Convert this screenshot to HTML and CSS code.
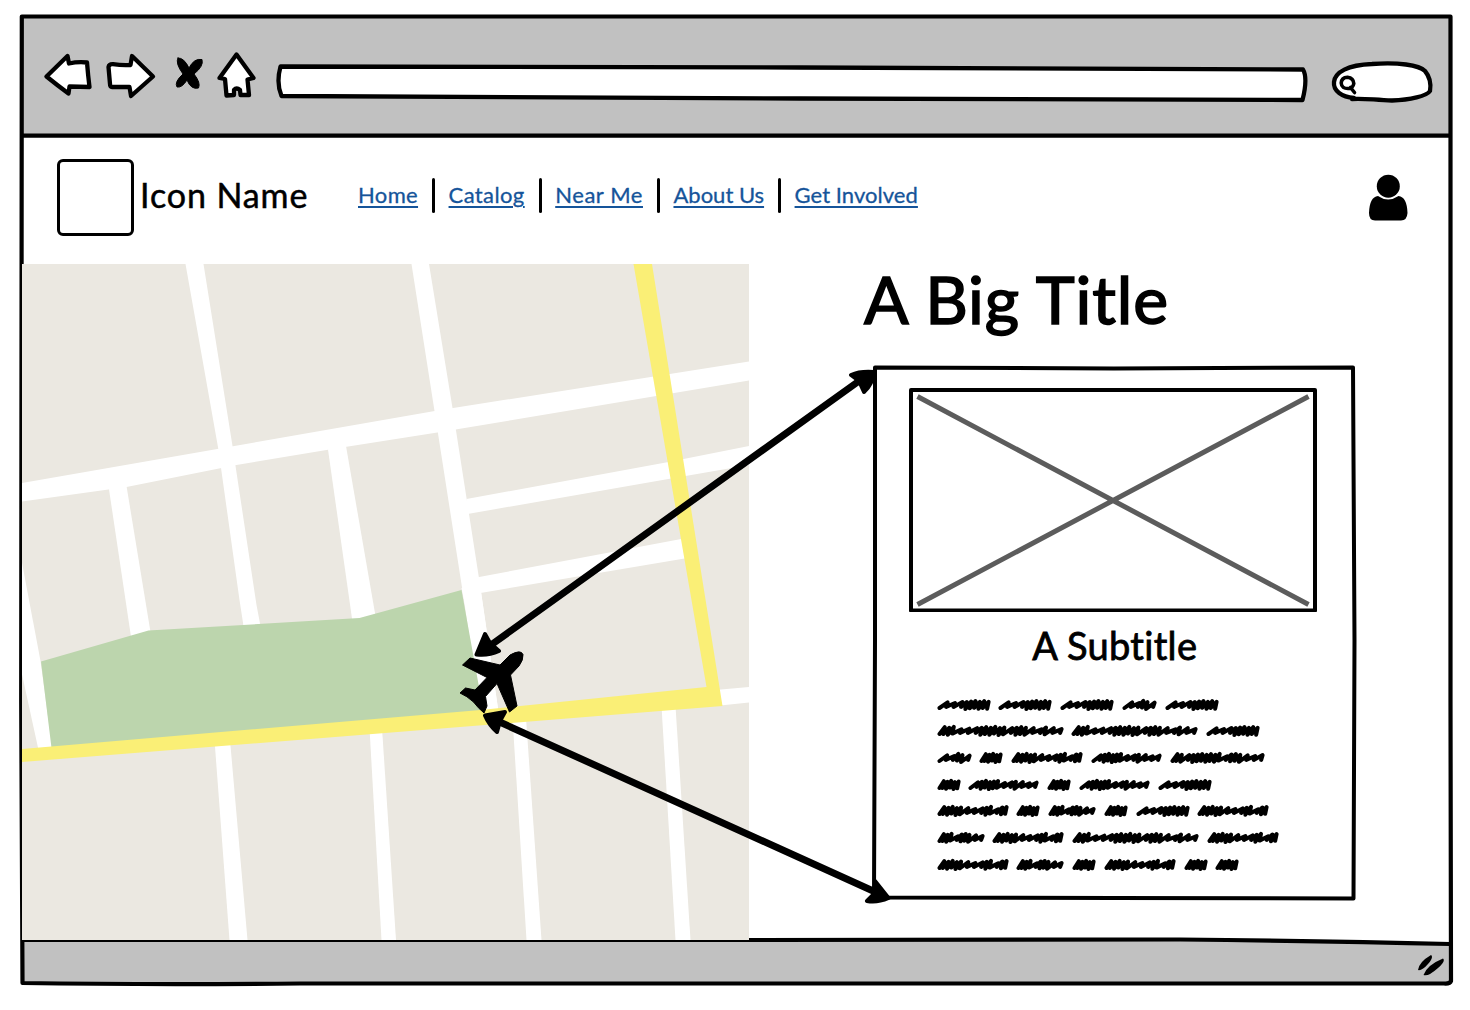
FILE: index.html
```html
<!DOCTYPE html>
<html lang="en">
<head>
<meta charset="utf-8">
<title>Icon Name</title>
<link rel="stylesheet" href="styles.css">
</head>
<body>
<div class="window">
  <svg class="frame" viewBox="0 0 1470 1010">
    <path d="M22 940L749 940L1180 939.5Q1330 941 1450 944" />
    <path d="M21.800 16.500H1450.500V700L1451 981Q1450 984 1444 983.500L900 983.500L300 983.500Q150 985 22.500 983L21.200 700L21.800 16.500Z" />
    <path d="M22 135.700H1450" />
  </svg>

  <header class="toolbar">
    <svg class="tool" width="52" height="56" viewBox="44 50 52 56"><path d="M46.500 76.500L67.500 56L69 63.500Q78 61.500 87 62.500Q88 75 89.500 87L69.500 86.500L68.500 93.500Q57 85 46.500 76.500Z"/></svg>
    <svg class="tool" width="54" height="56" viewBox="106 50 54 56"><path d="M108.500 67Q109 64 113 64.200Q122 65.500 130.500 65L132 56L153 76.500L131 96L129.500 87H112Q110 87 110 84Z"/></svg>
    <svg class="tool solid" width="36" height="56" viewBox="170 50 36 56"><path d="M178 58Q184 57.500 189 68Q194 58 202 59.500Q204 66 194 74Q201 83 198.500 88Q191 90 187 80Q182 88 177 87Q174 82 183 74Q175 63 178 58Z"/></svg>
    <svg class="tool" width="46" height="56" viewBox="216 50 46 56"><path d="M236.500 54.500L253.500 78L247.500 79.500L249 95L240.500 95L240 90Q236.500 87 234 90L234 95L226.500 95.500L225 79L219.500 78Z"/></svg>
    <svg class="tool address" width="1044" height="56" viewBox="272 50 1044 56"><path d="M280.500 66.500L800 67.500L1303 69.500Q1308 78 1302.500 100L800 98.500L281.500 96Q276 83 280.500 66.500Z"/></svg>
    <svg class="tool" width="114" height="56" viewBox="1326 50 114 56"><path d="M1354 98C1342 97 1333 91 1334 82C1335 72 1348 65 1372 64C1398 62 1419 65 1425 71C1430 77 1431 85 1430 91C1427 96 1410 100 1392 100.500C1374 100 1364 98 1352 99"/><path class="lens" d="M1349 88.500Q1341.500 89 1341.200 83Q1341.500 77.500 1347.500 77.200Q1353.500 78 1353.800 83.500Q1353 88 1349 88.500M1350.500 87.500L1354.500 92.500"/></svg>
  </header>

  <nav class="site">
    <div class="logo"></div>
    <div class="name">Icon Name</div>
    <ul class="links">
      <li><a class="home">Home</a></li>
      <li><a class="catalog">Catalog</a></li>
      <li><a class="near">Near Me</a></li>
      <li><a class="about">About Us</a></li>
      <li><a class="involved">Get Involved</a></li>
    </ul>
    <svg class="user" width="40" height="48" viewBox="1367 173 40 48"><circle cx="1387.300" cy="186.200" r="11.500"/><path d="M1377 196Q1387 203 1397.500 196Q1406 197 1406.500 213Q1406 220.500 1400 220.500H1374Q1368 220.500 1368 213Q1368.500 197 1377 196Z"/></svg>
  </nav>

  <main class="content">
    <svg class="map" width="727.500" height="675.500" viewBox="21.500 264 727.500 675.500">
      <rect class="land" x="21" y="264" width="729" height="676"/>
      <g class="road">
        <path d="M21 483L440 410L749 361.500V380.500L440 432L335 448.500L236 465L126 487L21 501.500Z"/>
        <path d="M185 264H203L232 446L256 605L260 626H243L239 600L218 450Z"/>
        <path d="M108 486H126L150 632L131 640Z"/>
        <path d="M327 446H345.500L375 616L352 622Z"/>
        <path d="M411 264H428.500L452 408L478 575L498 712L480 712L463 597L434 411Z"/>
        <path d="M466 499L668 462L749 446V465L685 476L467 514Z"/>
        <path d="M476 577.500L686 538L690 557.500L480 593Z"/>
        <path d="M21 560L40 661L52 750H38L21 672Z"/>
        <path d="M214 740H229.500L247 940H229Z"/>
        <path d="M369 728H381.500L395.500 940H381Z"/>
        <path d="M512 718H525.500L541 940H526Z"/>
        <path d="M661 706H675L690 940H675Z"/>
        <path d="M715 690L749 687V702.500L715 706Z"/>
      </g>
      <path class="park" d="M40.500 661.500L148 630.500L359 618L461 590L483 712L51 748Z"/>
      <path class="road" d="M461 588L485 700L482 712L498 712L480 588Z"/>
      <path class="highway" d="M633 264H651.500L722 706L21 762V749L480 710L706 687Z"/>
    </svg>

    <section class="detail">
      <h1>A Big Title</h1>
      <article class="card">
        <svg class="outline" viewBox="870 362 490 542"><path d="M875 367.500L1114 368.500L1353 367.500L1354.500 640L1353.500 898.500L1114 898L874 897.500L875 640Z"/></svg>
        <svg class="picture" width="408" height="224" viewBox="909.500 388.500 408 224"><path d="M918 397L1309 605M1309 397L918 605"/><path class="edge" d="M911.500 390.500H1315.500V611H911.500Z"/></svg>
        <h2>A Subtitle</h2>
        <div class="copy" id="copy"></div>
      </article>
    </section>
  </main>

  <footer class="status">
    <svg width="28" height="24" viewBox="1416 952 28 24"><path d="M1418 970Q1419 962 1431 955Q1434 957 1428 964Q1422 971 1418 970Z M1423.500 975Q1427 965 1443 958.500Q1446 961 1438 968Q1428 977 1423.500 975Z"/></svg>
  </footer>

  <svg class="connectors" viewBox="0 0 1470 1010">
    <path class="line" d="M484 650L866 376M493 719L882 895"/>
    <path class="head" d="M476.500 654.500L485 634L490 643L499 651Q488 656 476.500 654.500Z M873.500 372Q860 371 851 375L859 381L864 392Q873 384 873.500 372Z M485 715.500L505 712L500 721L497 732Q489 725 485 715.500Z M888.500 898L875 881L875 893L867 901Q877 903 888.500 898Z"/>
    <path class="plane" d="M462.500 665L470 658L500 665L510 655Q521 649 523 654.500Q523.500 660 519 666L510.500 675L517 706L509.500 712L497 683.500L485.500 696.500L487 706L484 713Q478 708 473.500 702Q467 696 460 693L465.500 688L475 690L487 677.500Z"/>
  </svg>
</div>
<script src="copy.js"></script>
</body>
</html>
```
FILE: copy.js
```js
// Scribbled placeholder words: "L" is a loose stroke, "T" a tight one.
const words = {
  a: [54, "LLLTTTTTT"],
  b: [35, "LLTTL"],
  c: [127, "TTTLLLTTTTTTLTTTLLTLL"],
  d: [24, "TTTTT"],
  e: [72, "TTTTTLLLTTLTT"],
  f: [71, "LTTTTTLLTLLL"],
  g: [95, "TTLTTTTTTTLTTTLLL"],
  h: [48, "TTTLTTTLL"]
};
const lines = ["aaaba", "cca", "bdefg", "dfdfa", "edhdae", "hece", "ehdedd"];
const wobble = [0, 0.9, -0.5, 1.3, 0.4, -0.3, 1];

function scribble(width, strokes) {
  const advance = { L: 6.5, T: 3.8 };
  const total = [...strokes].reduce((sum, s) => sum + advance[s], 0);
  const scale = (width - 5.5) / total;
  let x = 2.5;
  let d = `M${x} 10`;
  [...strokes].forEach((s, i) => {
    const shift = wobble[i % wobble.length];
    const rise = s === "L" ? 4.4 : 3.2;
    x += advance[s] * scale;
    d += `L${(x + 0.6).toFixed(1)} ${(rise + shift * 0.7).toFixed(1)}`;
    d += `L${(x - 0.8).toFixed(1)} ${(s === "L" ? 8.9 : 10 + shift * 0.8).toFixed(1)}`;
  });
  return d;
}

document.getElementById("copy").innerHTML = lines.map(line =>
  '<div class="row">' + [...line].map(key => {
    const [width, strokes] = words[key];
    return `<svg width="${width}" height="14" viewBox="0 0 ${width} 14"><path d="${scribble(width, strokes)}"/></svg>`;
  }).join("") + "</div>").join("");
```
FILE: styles.css
```css
body { margin: 0; background: #fff; color: #000; font-family: Lato, "Open Sans", sans-serif; font-variant-ligatures: none; }
svg { display: block; flex: none; }
.window { position: relative; z-index: 0; box-sizing: border-box; width: 1470px; height: 1010px; padding: 15px 18px 26px 21.5px; display: flex; flex-direction: column; overflow: hidden; }
.frame, .connectors { position: absolute; left: 0; top: 0; width: 1470px; height: 1010px; pointer-events: none; }
.frame path { fill: none; stroke: #000; stroke-width: 4.200; stroke-linejoin: round; }

.toolbar { box-sizing: border-box; height: 121px; padding: 35px 0 0 22.5px; background: #c1c1c1; display: flex; gap: 10px; }
.tool path { fill: #fff; stroke: #000; stroke-width: 4.300; stroke-linejoin: round; stroke-linecap: round; }
.tool.solid path { fill: #000; stroke-width: 1; }
.tool .lens { stroke-width: 3.600; }

.site { box-sizing: border-box; height: 128px; padding: 23px 44.5px 0 35.5px; display: flex; align-items: flex-start; }
.logo { box-sizing: border-box; width: 77px; height: 77px; border: 3px solid #000; border-radius: 6px; }
.name { width: 218px; margin: 15px 0 0 6px; font-size: 34px; line-height: 42px; letter-spacing: 0.900px; -webkit-text-stroke: 0.500px #000; white-space: nowrap; }
.links { list-style: none; margin: 19px 0 0; padding: 0; display: flex; }
.links li { height: 35px; display: flex; white-space: nowrap; }
.links li + li::before { content: ""; width: 3px; height: 35px; margin: 0 13.500px 0 14px; border-radius: 2px; background: #000; }
.links a { font-size: 22px; line-height: 34px; color: #15549a; text-decoration: underline; text-decoration-thickness: 2px; text-underline-offset: 3px; -webkit-text-stroke: 0.300px #15549a; }
.home { letter-spacing: 0.350px; }
.catalog { letter-spacing: 0.400px; }
.near { letter-spacing: 0.550px; }
.about { letter-spacing: 0; }
.involved { letter-spacing: 0.050px; }
.user { margin: 14px 0 0 auto; }

.content { height: 675px; display: flex; }
.map { position: relative; z-index: 0; }
.land { fill: #ebe8e1; }
.road { fill: #fff; }
.park { fill: #bcd5ad; }
.highway { fill: #faef76; }

.detail { flex: 1; }
h1 { margin: -3px 0 0 115px; height: 101px; font-size: 66px; line-height: 75px; font-weight: 400; letter-spacing: 0.900px; -webkit-text-stroke: 1.600px #000; white-space: nowrap; }
.card { position: relative; box-sizing: border-box; width: 490px; height: 542px; margin-left: 121px; padding: 26px 39.500px 0 39px; }
.outline { position: absolute; left: 0; top: 0; width: 490px; height: 542px; }
.outline path, .picture .edge { fill: none; stroke: #000; stroke-width: 4; stroke-linejoin: round; }
.picture path { fill: none; stroke: #5c5c5c; stroke-width: 5; }
.picture .edge { stroke-width: 4; stroke: #000; }
h2 { margin: 8px 0 0; font-size: 38px; line-height: 50px; font-weight: 400; text-align: center; letter-spacing: 0.300px; -webkit-text-stroke: 0.800px #000; }
.copy { padding: 27.500px 0 0 27.500px; display: flex; flex-direction: column; gap: 12.700px; }
.row { display: flex; gap: 7.800px; }
.row path { fill: none; stroke: #000; stroke-width: 4; stroke-linecap: round; stroke-linejoin: round; }

.status { height: 44px; background: #c1c1c1; display: flex; align-items: center; justify-content: flex-end; padding: 5px 8px 0 0; box-sizing: border-box; clip-path: polygon(0 0, 80% 0, 100% 5px, 100% 100%, 0 100%); }
.toolbar, .status { position: relative; z-index: -1; }
.connectors .line { fill: none; stroke: #000; stroke-width: 7; }
.connectors .head { stroke: #000; stroke-width: 4; stroke-linejoin: round; }
.connectors .plane { stroke: #000; stroke-width: 1; stroke-linejoin: round; }
```
